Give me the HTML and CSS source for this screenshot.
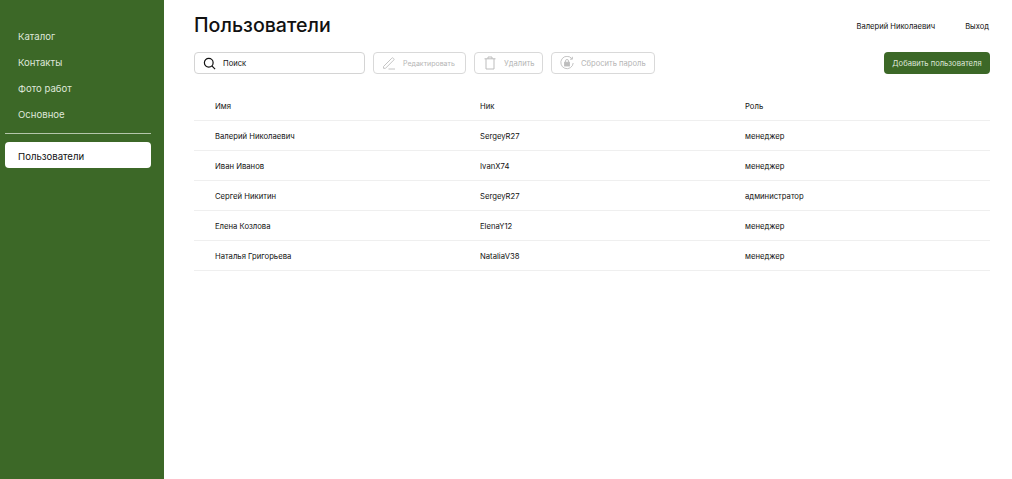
FILE: index.html
```html
<!DOCTYPE html>
<html lang="ru">
<head>
<meta charset="utf-8">
<title>Пользователи</title>
<link rel="stylesheet" href="styles.css">
</head>
<body>
<div class="app">
  <aside class="sidebar">
    <nav class="nav">
      <a class="nav-item">Каталог</a>
      <a class="nav-item">Контакты</a>
      <a class="nav-item">Фото работ</a>
      <a class="nav-item">Основное</a>
    </nav>
    <div class="divider"></div>
    <a class="nav-item active">Пользователи</a>
  </aside>
  <main class="main">
    <header class="header">
      <h1 class="title">Пользователи</h1>
      <div class="user">
        <span>Валерий Николаевич</span>
        <span class="logout">Выход</span>
      </div>
    </header>
    <div class="toolbar">
      <label class="search">
        <svg class="ico-search" width="13" height="13" viewBox="0 0 14 14" fill="none" stroke="#111" stroke-width="1.3"><circle cx="6.2" cy="6.2" r="4.7"/><path d="M9.6 9.6 13 13"/></svg>
        <span>Поиск</span>
      </label>
      <button class="btn btn-edit">
        <svg width="14" height="14" viewBox="0 0 14 14" fill="none" stroke="#bdbdbd" stroke-width="0.9"><path d="M1.5 10.5 9.8 2.2a1 1 0 0 1 1.5 0l.4.4a1 1 0 0 1 0 1.5L3.5 12.3H1.5z"/><path d="M6.5 13h6.5"/></svg>
        <span>Редактировать</span>
      </button>
      <button class="btn btn-del">
        <svg width="12" height="14" viewBox="0 0 12 14" fill="none" stroke="#bdbdbd" stroke-width="1"><path d="M.5 2.8h11"/><path d="M4 2.8V1h4v1.8"/><path d="M2 2.8V13h8V2.8"/></svg>
        <span>Удалить</span>
      </button>
      <button class="btn btn-reset">
        <svg width="14" height="14" viewBox="0 0 14 14" fill="none" stroke="#bdbdbd" stroke-width="0.9"><path d="M12 2.8A6.2 6.2 0 1 0 13.2 7"/><path d="M12.4 .8V3.2H10"/><rect x="4.6" y="6.2" width="4.8" height="3.8" fill="#bdbdbd"/><path d="M5.5 6.2V5a1.5 1.5 0 0 1 3 0v1.2"/></svg>
        <span>Сбросить пароль</span>
      </button>
      <button class="btn-add">Добавить пользователя</button>
    </div>
    <div class="table">
      <div class="row head"><span>Имя</span><span>Ник</span><span>Роль</span></div>
      <div class="row"><span>Валерий Николаевич</span><span>SergeyR27</span><span>менеджер</span></div>
      <div class="row"><span>Иван Иванов</span><span>IvanX74</span><span>менеджер</span></div>
      <div class="row"><span>Сергей Никитин</span><span>SergeyR27</span><span>администратор</span></div>
      <div class="row"><span>Елена Козлова</span><span>ElenaY12</span><span>менеджер</span></div>
      <div class="row"><span>Наталья Григорьева</span><span>NataliaV38</span><span>менеджер</span></div>
    </div>
  </main>
</div>
</body>
</html>
```
FILE: styles.css
```css
* { box-sizing: border-box; }
html, body { margin: 0; height: 100%; }
body { font-family: "Inter", "Liberation Sans", sans-serif; color: #111; background: #fff; overflow: hidden; }
.app { display: flex; height: 479px; }
.sidebar { width: 164px; flex: none; background: #3c6827; padding: 23px 13px 0 5px; }
.nav { display: flex; flex-direction: column; }
.nav-item { display: flex; align-items: center; height: 26px; padding-left: 13px; font-size: 9.6px; color: #dfe7da; border-radius: 4px; }
.divider { height: 1px; background: #b4c6aa; margin: 6px 0 8px; }
.nav-item.active { background: #fff; color: #111; padding-top: 2px; }
.main { flex: 1; padding: 0 22px 0 30px; min-width: 0; }
.header { display: flex; align-items: center; justify-content: space-between; height: 52px; }
.title { margin: 0; font-size: 19.6px; font-weight: 500; padding-bottom: 2px; }
.user { display: flex; gap: 30px; font-size: 7.6px; padding-right: 1px; }
.toolbar { display: flex; align-items: center; gap: 8px; height: 22px; }
.search { display: flex; align-items: center; gap: 7px; width: 171px; height: 22px; padding-left: 8px; border: 1px solid #d4d4d4; border-radius: 4px; font-size: 7.6px; }
.btn { display: flex; align-items: center; height: 22px; padding: 0; background: #fff; border: 1px solid #d9d9d9; border-radius: 4px; font: inherit; font-size: 7.6px; color: #b5b5b5; }
.btn-edit { width: 93px; gap: 7px; padding-left: 8px; font-size: 7px; }
.btn-del { width: 69px; gap: 8px; padding-left: 9px; }
.btn-reset { width: 104px; gap: 7px; padding-left: 8px; }
.btn-add { margin-left: auto; width: 106px; height: 22px; padding: 0; border: 0; border-radius: 4px; background: #3c6827; color: #dfe7da; font: inherit; font-size: 7.6px; }
.table { margin-top: 17px; }
.row { display: grid; grid-template-columns: 265px 265px 1fr; align-items: center; height: 30px; padding-top: 2px; padding-left: 21px; border-bottom: 1px solid #efefef; font-size: 7.7px; color: #111; }
```
